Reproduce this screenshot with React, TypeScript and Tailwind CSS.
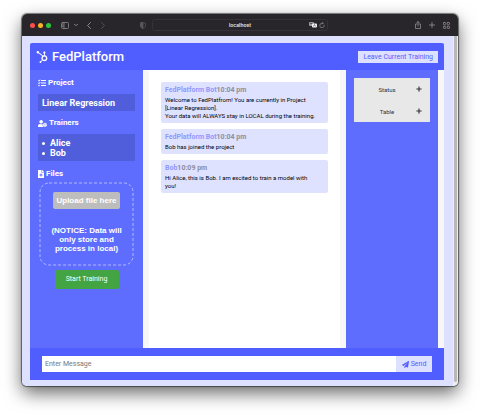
import React from "react";
import { FaHubspot, FaTasks, FaUserCog, FaFileMedical, FaPlus, FaPaperPlane } from "react-icons/fa";

type Message = { author: string; time: string; lines: string[] };

const messages: Message[] = [
  {
    author: "FedPlatform Bot",
    time: "10:04 pm",
    lines: [
      "Welcome to FedPlatfrom! You are currently in Project [Linear Regression].",
      "Your data will ALWAYS stay in LOCAL during the training.",
    ],
  },
  { author: "FedPlatform Bot", time: "10:04 pm", lines: ["Bob has joined the project"] },
  { author: "Bob", time: "10:09 pm", lines: ["Hi Alice, this is Bob. I am excited to train a model with you!"] },
];

const iconProps = { fill: "none", stroke: "currentColor", strokeLinecap: "round", strokeLinejoin: "round" } as const;

function BrowserBar() {
  return (
    <div className="grid h-[22px] shrink-0 grid-cols-[1fr_176px_1fr] items-center bg-[#28262b] text-[#8b8a8e]">
      <div className="flex items-center pl-2">
        <div className="flex gap-[3px]">
          <span className="size-[5px] rounded-full bg-[#fc4f4a]" />
          <span className="size-[5px] rounded-full bg-[#fdb125]" />
          <span className="size-[5px] rounded-full bg-[#2bc63a]" />
        </div>
        <button aria-label="Show sidebar" className="ml-[10px]">
          <svg className="h-[7px] w-2" viewBox="0 0 16 14" strokeWidth="1.6" {...iconProps}>
            <rect x="1" y="1" width="14" height="12" rx="2" />
            <path d="M6 1v12M3 4h1M3 6.500h1M3 9h1" />
          </svg>
        </button>
        <button aria-label="Tab groups" className="ml-[5px]">
          <svg className="size-1" viewBox="0 0 8 8" strokeWidth="2" {...iconProps}>
            <path d="M1 2.500l3 3 3-3" />
          </svg>
        </button>
        <button aria-label="Back" className="ml-[9px]">
          <svg className="h-[7px] w-1" viewBox="0 0 8 14" strokeWidth="2" {...iconProps}>
            <path d="M7 1L1 7l6 6" />
          </svg>
        </button>
        <button aria-label="Forward" className="ml-[10px] text-[#515054]">
          <svg className="h-[7px] w-1" viewBox="0 0 8 14" strokeWidth="2" {...iconProps}>
            <path d="M1 1l6 6-6 6" />
          </svg>
        </button>
        <button aria-label="Privacy report" className="mr-[6px] ml-auto text-[#59585c]">
          <svg className="h-[7px] w-[6px]" viewBox="0 0 12 14" strokeWidth="1.4" {...iconProps}>
            <path d="M6 1l5 1.500v5c0 3-2 4.500-5 5.500-3-1-5-2.500-5-5.500v-5z" />
            <path d="M6 1v12c-3-1-5-2.500-5-5.500v-5z" fill="currentColor" />
          </svg>
        </button>
      </div>
      <div className="grid h-3 grid-cols-[1fr_auto_1fr] items-center rounded-[3px] border border-[#353338] px-[2px]">
        <span className="col-start-2 font-['Inter',sans-serif] text-[5px] leading-[8px] font-semibold text-[#e8e8ea]">
          localhost
        </span>
        <div className="flex items-center justify-end gap-[2px]">
          <button aria-label="Translate">
            <svg className="h-[6px] w-2" viewBox="0 0 16 12">
              <rect x="0" y="0" width="10" height="8" rx="2" fill="#9a999d" />
              <rect x="6" y="3" width="10" height="8" rx="2" fill="#f2f2f3" />
              <path d="M9 9l2-4 2 4M2 3h5M4.500 2v1" fill="none" stroke="#28262b" />
            </svg>
          </button>
          <button aria-label="Reload">
            <svg className="size-[6px]" viewBox="0 0 12 12" strokeWidth="1.500" {...iconProps}>
              <path d="M10.500 6.500A4.500 4.500 0 1 1 6 2.500h2M6.500 .8L8.300 2.500 6.500 4.300" />
            </svg>
          </button>
        </div>
      </div>
      <div className="flex items-center justify-end gap-2 pr-2">
        <button aria-label="Share">
          <svg className="h-2 w-[6px]" viewBox="0 0 12 16" strokeWidth="1.600" {...iconProps}>
            <path d="M4 6H1v9h10V6H8M6 10V1M3.500 3.500L6 1l2.500 2.500" />
          </svg>
        </button>
        <button aria-label="New tab">
          <svg className="size-[6px]" viewBox="0 0 12 12" strokeWidth="1.800" {...iconProps}>
            <path d="M6 1v10M1 6h10" />
          </svg>
        </button>
        <button aria-label="Tab overview">
          <svg className="size-[7px]" viewBox="0 0 14 14" strokeWidth="1.500" {...iconProps}>
            <rect x="1" y="1" width="4.500" height="4.500" rx="1" />
            <rect x="8.500" y="1" width="4.500" height="4.500" rx="1" />
            <rect x="1" y="8.500" width="4.500" height="4.500" rx="1" />
            <rect x="8.500" y="8.500" width="4.500" height="4.500" rx="1" />
          </svg>
        </button>
      </div>
    </div>
  );
}

function Heading({ icon, children }: { icon: React.ReactNode; children: React.ReactNode }) {
  return (
    <h2 className="flex items-center gap-[2px] text-[8px] leading-[10px] font-bold">
      {icon}
      {children}
    </h2>
  );
}

function Sidebar() {
  return (
    <aside className="w-[113px] shrink-0 bg-[#5f6dff] px-2 pt-2 text-white">
      <Heading icon={<FaTasks />}>Project</Heading>
      <p className="mt-[6px] bg-[#515edc] px-1 pt-1 pb-[2px] text-[9px] leading-[11px] font-bold">Linear Regression</p>
      <div className="mt-[7px]">
        <Heading icon={<FaUserCog className="size-[9px]" />}>Trainers</Heading>
      </div>
      <ul className="mt-[6px] bg-[#515edc] px-1 pt-[5px] pb-[3px] text-[9px] leading-[9px] font-bold">
        {["Alice", "Bob"].map((name) => (
          <li key={name} className="flex h-[9px] items-center gap-[5px] last:mt-px">
            <span className="size-[3px] rounded-full bg-white" />
            {name}
          </li>
        ))}
      </ul>
      <div className="mt-2">
        <Heading icon={<FaFileMedical className="h-2 w-[6px]" />}>Files</Heading>
      </div>
      <div className="mt-1 px-[2px]">
        <div className="relative flex h-[82px] flex-col items-center px-2 pt-[9px] font-['Liberation_Sans',sans-serif] text-[8px] font-bold">
          <svg className="absolute inset-0 size-full overflow-visible" aria-hidden="true">
            <rect width="100%" height="100%" rx="9" fill="none" stroke="#b4baff" strokeDasharray="3 2" />
          </svg>
          <button className="relative h-[17px] rounded-[2px] bg-[#bdbdbd] px-[3px] whitespace-nowrap">Upload file here</button>
          <p className="relative mt-[17px] text-center leading-[9px]">(NOTICE: Data will only store and process in local)</p>
        </div>
      </div>
      <div className="mt-[5px] flex justify-center">
        <button className="h-[19px] w-16 rounded-[2px] bg-[#42a442] text-[7px]">Start Training</button>
      </div>
    </aside>
  );
}

function Messages() {
  return (
    <main className="mx-[6px] flex min-w-0 flex-1 flex-col gap-[6px] bg-white px-3 pt-3">
      {messages.map((m) => (
        <article key={m.author + m.lines[0]} className="rounded-[2px] bg-[#dfe2ff] pt-1 pr-3 pb-[3px] pl-1">
          <p className="text-[7px] leading-[8px] font-bold text-[#8f98ff]">
            {m.author}
            <time className="text-[#8d8d9b]">{m.time}</time>
          </p>
          <div className="mt-[2px] text-[6px] leading-[8px] text-black">
            {m.lines.map((l) => (
              <p key={l}>{l}</p>
            ))}
          </div>
        </article>
      ))}
    </main>
  );
}

function Panel() {
  return (
    <aside className="mr-[6px] w-[92px] shrink-0 bg-[#5f6dff] px-2 pt-2">
      <div className="bg-[#e8e8e8] text-[#333]">
        {["Status", "Table"].map((name) => (
          <button key={name} className="grid h-[22px] w-full grid-cols-[1fr_auto] items-center pr-2 pl-1 text-[6px]">
            <span>{name}</span>
            <FaPlus className="size-[6px]" />
          </button>
        ))}
      </div>
    </aside>
  );
}

export default function App() {
  return (
    <div className="h-screen bg-white px-[22px] pt-[14px] pb-[29px] font-['Roboto',sans-serif]">
      <div className="flex h-full flex-col overflow-hidden rounded-[5px] shadow-[0_0_1px_1px_#00000080,0_7px_18px_#00000099]">
        <BrowserBar />
        <div className="flex min-h-0 flex-1 bg-[#dde1ff]">
          <div className="flex min-w-0 flex-1 flex-col pt-[7px] pr-[9px] pb-[6px] pl-2">
            <header className="flex h-[27px] shrink-0 items-center justify-between rounded-t-[2px] bg-[#515eff] pr-[6px] pl-[6px] text-white">
              <h1 className="flex items-center gap-1 text-[13px] leading-4 font-medium">
                <FaHubspot className="size-3" />
                FedPlatform
              </h1>
              <a href="#leave" className="bg-[#dde1ff] px-[5px] text-[7px] leading-3 text-[#515eff]">
                Leave Current Training
              </a>
            </header>
            <div className="flex min-h-0 flex-1 bg-[#f7f7f7]">
              <Sidebar />
              <Messages />
              <Panel />
            </div>
            <form className="flex h-8 shrink-0 bg-[#515eff] px-3 py-2" onSubmit={(e) => e.preventDefault()}>
              <input aria-label="Message" placeholder="Enter Message" className="min-w-0 flex-1 bg-white px-[3px] text-[7px] outline-none placeholder:text-[#777]" />
              <button className="flex w-9 items-center justify-center gap-[2px] bg-[#dde1ff] text-[7px] text-[#515eff]">
                <FaPaperPlane />
                Send
              </button>
            </form>
          </div>
          <div className="flex w-[5px] justify-center bg-[#eeeeee]">
            <span className="mb-1 w-[3px] rounded-b-full bg-[#b8b8b8]" />
          </div>
        </div>
      </div>
    </div>
  );
}
